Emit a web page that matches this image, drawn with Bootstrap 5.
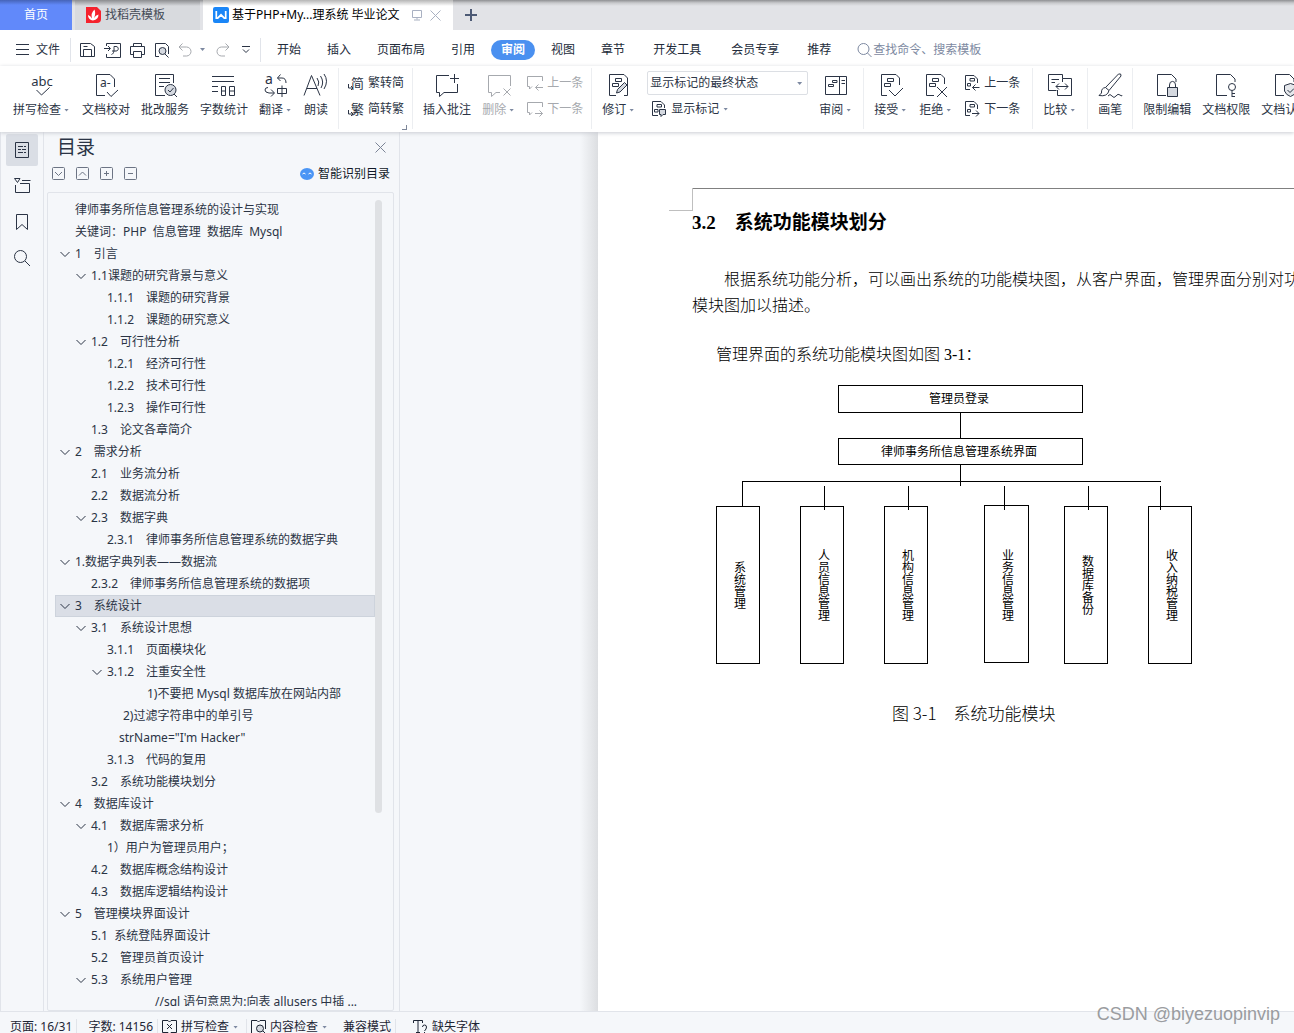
<!DOCTYPE html>
<html lang="zh-CN">
<head>
<meta charset="utf-8">
<meta name="viewport" content="width=device-width, initial-scale=1">
<title>基于PHP+Mysql的律师事务所信息管理系统 毕业论文</title>
<link href="https://cdn.jsdelivr.net/npm/bootstrap@5.3.0/dist/css/bootstrap.min.css" rel="stylesheet">
<style>
  :root { --ink:#2b3445; --chrome:#f5f7fa; --edge:#e1e4ea; --soft:#7d89a1; }
  body { font:12px/16px "Noto Sans","Noto Sans CJK SC",sans-serif; color:var(--ink); background:var(--chrome); }
  button { font:inherit; color:inherit; background:none; border:0; padding:0; white-space:nowrap; }
  svg { fill:none; flex:none; display:block; overflow:visible; }
  svg:not([stroke]) { stroke:currentColor; }
  .caret { width:5px; height:3px; flex:none; background:var(--soft); clip-path:polygon(0 0,100% 0,50% 100%); }

  .tabstrip { height:30px; background:linear-gradient(#8f9093,#c9cacd 3px,#e2e3e7 6px); }
  .tab-home { width:72px; background:linear-gradient(#4664b8,#6189fa 5px); color:#fff; margin-right:3px; }
  .tab-docer { width:125px; background:linear-gradient(#8b8c8f,#d8dade 6px); padding-left:11px; gap:4px; margin-right:3px; color:#444a56; }
  .tab-doc { width:250px; background:linear-gradient(#b5b5b5,#fff 6px); padding-left:10px; gap:3px; color:#000; }
  .tab-doc .dim { color:#a9b1c2; }
  .tab-new { padding:0 12px; }

  .menubar { height:36px; padding:3px 0 0 16px; }
  .file-btn { gap:7px; }
  .quick { padding:0 9px 0 8px; gap:7px; border:solid var(--edge); border-width:0 1px; height:24px; margin-left:10px; margin-right:3px; }
  .menu-item { padding:0 13px; color:#222b3a; }
  .menu-wide { padding:0 15px; }
  .menu-on { background:#4a90f0; color:#fff; border-radius:10px; height:20px; padding:0 10px; margin:0 3px; font-weight:700; }
  .search-box { color:var(--soft); margin-left:13px; }
  .search-box input { border:0; outline:0; background:none; width:140px; padding:0; color:var(--soft); }
  .search-box input::placeholder { color:var(--soft); opacity:1; }

  .ribbon { height:66px; box-shadow:0 1px 4px #c9ccd2; z-index:2; }
  .rgroup { border-right:1px solid #eceef1; padding:5px 10px 0; gap:11px; height:61px; margin-top:2px; flex:none; position:relative; }
  .rgroup:first-child { padding-left:13px; }
  .rbtn { display:flex; flex-direction:column; align-items:center; gap:1px; height:50px; }
  .rbtn svg { margin:0 -1px; }
  .rbtn span { display:flex; align-items:center; gap:3px; padding-right:2px; margin-top:2px; }
  .rbtn span.plain { padding-right:0; }
  .rstack { display:flex; flex-direction:column; gap:10px; align-items:flex-start; padding-top:2px; }
  .rstack button { display:flex; align-items:center; gap:4px; height:16px; }
  .off { color:#a6a9ae; }
  .state-wrap { position:relative; height:16px; }
  .state-select { display:block; appearance:none; width:161px; height:24px; border:1px solid #dcdfe4; border-radius:2px; padding:0 2px; background:#fff; color:var(--ink); font:inherit; margin-top:-4px; }
  .state-wrap .caret { position:absolute; right:6px; top:7px; }
  .launcher { position:absolute; right:5px; bottom:-1px; width:5px; height:5px; border:solid #7d8799; border-width:0 1px 1px 0; }

  .rail { width:44px; border:solid var(--edge); border-width:0 1px; padding:2px 0 0 5px; gap:4px; }
  .rail button { width:32px; height:32px; display:flex; align-items:center; justify-content:center; border-radius:2px; }
  .rail .active { background:#dadee5; }
  .outline-pane { width:356px; padding:3px 5px 0 3px; border-right:1px solid var(--edge); }
  .outline-title { font-size:19px; line-height:24px; margin:0; padding-left:10px; font-weight:400; }
  .outline-tools { gap:11px; padding:8px 4px 0 5px; height:33px; color:#6c7484; }
  .outline-tools button { height:13px; }
  .outline-tools .smart { color:#111827; gap:4px; height:14px; }
  .tree-box { border:1px solid var(--edge); border-radius:2px; padding:6px 11px 4px 7px; min-height:0; }
  .tree { list-style:none; margin:0; padding:0; overflow:hidden; min-width:0; }
  .tree li { height:22px; line-height:22px; padding-left:5px; display:flex; align-items:center; white-space:pre; }
  .tree li svg, .tree li i { width:10px; margin-right:5px; flex:none; }
  .tree .d1 { padding-left:21px; } .tree .d2 { padding-left:37px; }
  .tree .d3 { padding-left:49px; } .tree .d4 { padding-left:53px; } .tree .d5 { padding-left:77px; } .tree .d6 { padding-left:85px; }
  .tree .current { background:#dadee6; box-shadow:inset 0 0 0 1px #cdd3dc; }
  .track { width:7px; padding-top:1px; }
  .thumb { background:#dfe1e4; border-radius:4px; height:76%; }

  .gutter { width:198px; background:linear-gradient(to right,transparent 180px,#dcdee1); flex:none; }
  .paper { background:#fff; color:#000; min-width:0; padding:56px 0 0 94px; font:16px/26px "Liberation Serif","Noto Sans CJK SC",serif; font-weight:300; white-space:nowrap; position:relative; }
  .margin-rule { border-top:1px solid #808080; height:23px; }
  .crop-mark { position:absolute; left:71px; top:56px; width:24px; height:23px; border:solid #bfbfbf; border-width:0 1px 1px 0; }
  .paper h2 { font-size:19px; line-height:24px; font-weight:700; margin:0 0 32px; }
  .indent { text-indent:2em; margin:0 0 23px; }
  .lead-in { margin:0 0 17px; padding-left:24px; }
  .chart { margin-left:24px; fill:#000; shape-rendering:crispEdges; font:12px "Noto Sans CJK SC",sans-serif; }
  .chart rect, .chart path { fill:none; stroke:#000; }
  .chart .v { writing-mode:vertical-rl; }
  .caption-line { font-size:17px; margin:35px 0 0; padding-left:200px; font-family:"Noto Sans CJK SC",sans-serif; }

  .statusbar { height:22px; border-top:1px solid var(--edge); padding:7px 0 0 10px; color:#1d2534; white-space:nowrap; }
  .statusbar > * { height:16px; display:flex; align-items:center; gap:4px; flex:none; }
  .sep { border-left:1px solid var(--edge); }
  .stamp { position:absolute; right:14px; bottom:8px; font:18px/22px "Liberation Sans",sans-serif; color:#9a9ca0; z-index:3; }
</style>
</head>
<body class="vh-100 d-flex flex-column overflow-hidden position-relative">

<header class="tabstrip d-flex flex-shrink-0">
  <button class="tab-home">首页</button>
  <button class="tab-docer d-flex align-items-center">
    <svg width="15" height="16" viewBox="0 0 15 16" stroke="none"><path fill="#f5222d" d="M0 0h11l4 4v8a4 4 0 0 1-4 4H0z"/><path fill="#fff" d="M7 13.500C3.500 13 2 10.500 2 8q2.500.5 4 3.500Q4.500 6 8.500 2.500 10 7 8 11q1.500-3 4.500-3.500 0 5-5.500 6z"/></svg>
    找稻壳模板
  </button>
  <button class="tab-doc d-flex align-items-center">
    <svg width="16" height="16" viewBox="0 0 16 16" stroke="none"><rect width="16" height="16" rx="2" fill="#1a86f7"/><path fill="none" stroke="#fff" stroke-width="1.7" d="M3.300 4v7.200h1.400L8 7.800l3.300 3.400h1.400V4"/></svg>
    <span>基于PHP+My...理系统 毕业论文</span>
    <svg class="dim ms-2" width="12" height="12" viewBox="0 0 12 12"><path d="M1.500 1.500h9v7h-9zM6 8.500v2M3 11h6"/></svg>
    <svg class="dim ms-1" width="11" height="11" viewBox="0 0 11 11"><path d="M.5.5l10 10M10.500.5l-10 10"/></svg>
  </button>
  <button class="tab-new" aria-label="新建"><svg width="12" height="12" viewBox="0 0 12 12" stroke="#4d5a75" stroke-width="2"><path d="M6 0v12M0 6h12"/></svg></button>
</header>

<nav class="menubar bg-white d-flex align-items-center flex-shrink-0">
  <button class="file-btn d-flex align-items-center"><svg width="13" height="11" viewBox="0 0 13 11"><path d="M0 .5h13M0 5.500h13M0 10.500h13"/></svg>文件</button>
  <div class="quick d-flex align-items-center">
    <button aria-label="保存"><svg width="18" height="16" viewBox="0 0 18 16"><path d="M1.500 14.500V1.500H11.500L15.500 4.500V14.500zM4.500 14.500V7.500H12.500V14.500M4.500 4.500H8.500"/></svg></button>
    <button aria-label="输出为PDF"><svg width="18" height="16" viewBox="0 0 18 16"><path d="M2.500 4V1.500H16.500V15.500H2.500V12M0 6.500H6M4 4l2.500 2.500L4 9M7.500 12.500c3-1 2.500-5 2.500-8h2c3 0 3 4.500 0 4.500h-4"/></svg></button>
    <button aria-label="打印"><svg width="17" height="16" viewBox="0 0 17 16"><path d="M4.500 4.500V1.500H12.500V4.500M4.500 12.500H1.500V4.500H15.500V12.500H12.500M4.500 9.500H12.500V15.500H4.500z"/></svg></button>
    <button aria-label="打印预览"><svg width="18" height="16" viewBox="0 0 18 16"><path d="M6 14.500H2.500V1.500H12.500L15.500 4.500V12"/><circle cx="9.500" cy="9" r="3.500" fill="#d5d9e0"/><path d="M12 12l3.500 3.500"/></svg></button>
    <button class="off d-flex align-items-center gap-2" aria-label="撤销"><svg width="14" height="14" viewBox="0 0 14 14"><path d="M4.500.5L1 4l3.500 3.500M1 4h7.500a4.500 4.500 0 0 1 0 9H5"/></svg><i class="caret"></i></button>
    <button class="off ms-1" aria-label="恢复"><svg width="14" height="14" viewBox="0 0 14 14"><path d="M9.500.5L13 4 9.500 7.500M13 4H5.500a4.500 4.500 0 0 0 0 9H9"/></svg></button>
    <button class="ms-1" aria-label="更多"><svg width="10" height="8" viewBox="0 0 10 8"><path d="M1 .5h8M2 3.500l3 3 3-3"/></svg></button>
  </div>
  <button class="menu-item">开始</button>
  <button class="menu-item">插入</button>
  <button class="menu-item">页面布局</button>
  <button class="menu-item">引用</button>
  <button class="menu-item menu-on">审阅</button>
  <button class="menu-item">视图</button>
  <button class="menu-item">章节</button>
  <button class="menu-item menu-wide">开发工具</button>
  <button class="menu-item menu-wide">会员专享</button>
  <button class="menu-item">推荐</button>
  <label class="search-box d-flex align-items-center"><svg width="16" height="16" viewBox="0 0 16 16"><circle cx="6.500" cy="7" r="5.500"/><path d="M10.500 11l4 4"/></svg><input type="text" aria-label="查找命令" placeholder="查找命令、搜索模板"></label>
</nav>

<div class="ribbon bg-white d-flex position-relative flex-shrink-0">
  <div class="rgroup d-flex">
    <button class="rbtn"><svg width="26" height="26" viewBox="0 0 26 26"><text x="13" y="13" text-anchor="middle" font-size="13" fill="currentColor" stroke="none">abc</text><path d="M7.500 17l5 5 8-7.500"/></svg><span>拼写检查<i class="caret"></i></span></button>
    <button class="rbtn"><svg width="26" height="26" viewBox="0 0 26 26"><path d="M12 22.500H3.500V1.500H17L21.500 6V14M14 19l4 4.500L25 17"/><text x="7" y="14" font-size="12" fill="currentColor" stroke="none">a-</text></svg><span class="plain">文档校对</span></button>
    <button class="rbtn"><svg width="26" height="26" viewBox="0 0 26 26"><path d="M13 22.500H3.500V1.500H21.500V10M7 5.500H18M7 9.500H18M7 13.500H12"/><circle cx="18.500" cy="17" r="5.500" fill="#d5d9e0"/><path d="M16 17l2 2 3.500-4M22 21l3 3"/></svg><span class="plain">批改服务</span></button>
    <button class="rbtn"><svg width="26" height="26" viewBox="0 0 26 26"><path d="M1 3.500H23M1 8.500H23M1 13.500H7M1 18.500H7M10.500 13.500H14.500V22.500H10.500zM10.500 18H14.500M18.500 13.500H23.500V22.500H18.500zM18.500 18H23.500"/></svg><span class="plain">字数统计</span></button>
    <button class="rbtn"><svg width="26" height="26" viewBox="0 0 26 26"><text x="2" y="11" font-size="14" fill="currentColor" stroke="none">a</text><path d="M17.500 1.500L14.500 5l3 3M14.500 5H19q4 0 4 5M5 14.500q-3 0-3 2.500t4 3h5M8 16.500l3.500 3.500L8 23.500M14.500 15.500H23.500V20.500H14.500zM19 12.500V24"/></svg><span>翻译<i class="caret"></i></span></button>
    <button class="rbtn"><svg width="26" height="26" viewBox="0 0 26 26"><path d="M1 22.500L8.500 2.500 17 22.500M4 15.500H14M14 5q3 4 1 8M17.500 3q4 6 .5 12M21 1q5 7 0 15"/></svg><span class="plain">朗读</span></button>
  </div>
  <div class="rgroup d-flex px-2">
    <div class="rstack">
      <button><svg width="17" height="16" viewBox="0 0 17 16"><text x="4" y="13" font-size="13" fill="currentColor" stroke="none">简</text><path d="M1.500 9v4H6M4 11l2 2-2 2"/></svg>繁转简</button>
      <button><svg width="17" height="16" viewBox="0 0 17 16"><text x="4" y="13" font-size="13" fill="currentColor" stroke="none">繁</text><path d="M1.500 9v4H6M4 11l2 2-2 2"/></svg>简转繁</button>
    </div>
    <i class="launcher"></i>
  </div>
  <div class="rgroup d-flex pe-2">
    <button class="rbtn"><svg width="26" height="26" viewBox="0 0 26 26"><path d="M15 2.500H2.500V19.500H5.500V23.500L10 19.500H23.500V11M20.500 1V10M16 5.500H25"/></svg><span class="plain">插入批注</span></button>
    <button class="rbtn off"><svg width="26" height="26" viewBox="0 0 26 26"><path d="M24.500 13V2.500H2.500V19.500H5.500V23.500L10 19.500H14M17.500 15.500l7 7M24.500 15.500l-7 7"/></svg><span>删除<i class="caret"></i></span></button>
    <div class="rstack off">
      <button><svg width="16" height="16" viewBox="0 0 16 16"><path d="M15.500 6V1.500H.5V11.500H2.500V14L5 11.500M8.500 12.500H16M11.500 9.500l-3 3 3 3"/></svg>上一条</button>
      <button><svg width="16" height="16" viewBox="0 0 16 16"><path d="M15.500 6V1.500H.5V11.500H2.500V14L5 11.500M8 12.500H15.500M12.500 9.500l3 3-3 3"/></svg>下一条</button>
    </div>
  </div>
  <div class="rgroup d-flex">
    <button class="rbtn"><svg width="26" height="26" viewBox="0 0 26 26"><path d="M10 22.500H3.500V1.500H18L21.500 5V22.500H18M9.500 5.500H15.500V8.500H9.500zM6.500 10.500H12.500V13.500H6.500z"/><path fill="#d5d9e0" d="M10.500 20l1-3.500 7-7 2.500 2.500-7 7z"/></svg><span>修订<i class="caret"></i></span></button>
    <div class="rstack">
      <div class="state-wrap"><select class="state-select" aria-label="显示标记状态"><option>显示标记的最终状态</option></select><i class="caret"></i></div>
      <button class="ms-1"><svg width="16" height="16" viewBox="0 0 16 16"><path d="M7 14.500H1.500V.5H10L13.500 4V7M6 3.500H10.500V6H6zM3.500 8.500H7V11H3.500z"/><path fill="#d5d9e0" d="M8.500 8.500H14.500V13.500H12L10 15.500V13.500H8.500z"/></svg>显示标记<i class="caret"></i></button>
    </div>
    <button class="rbtn"><svg width="26" height="26" viewBox="0 0 26 26"><path d="M2.500 3.500H23.500V21.500H2.500zM16.500 3.500V21.500M9.500 7.500H14V9.500H9.500zM5.500 11.500H10.500V13.500H5.500zM18.500 7.500H22M18.500 10.500H22"/></svg><span>审阅<i class="caret"></i></span></button>
  </div>
  <div class="rgroup d-flex pe-2">
    <button class="rbtn"><svg width="26" height="26" viewBox="0 0 26 26"><path d="M9 22.500H3.500V1.500H18L21.500 5V12M9.500 5.500H15.500V8.500H9.500zM6.500 10.500H12.500V13.500H6.500zM11 17l6 6 8-8"/></svg><span>接受<i class="caret"></i></span></button>
    <button class="rbtn"><svg width="26" height="26" viewBox="0 0 26 26"><path d="M11 22.500H3.500V1.500H18L21.500 5V11M9.500 5.500H15.500V8.500H9.500zM6.500 10.500H12.500V13.500H6.500zM14 14l10 10M24 14L14 24"/></svg><span>拒绝<i class="caret"></i></span></button>
    <div class="rstack me-1">
      <button><svg width="16" height="16" viewBox="0 0 16 16"><path d="M6 14.500H1.500V.5H10L13.500 4V8M6 3.500H10.500V6H6zM3.500 8.500H6.500V11H3.500zM8.500 12.500H15.500M11.500 9.500l-3 3 3 3"/></svg>上一条</button>
      <button><svg width="16" height="16" viewBox="0 0 16 16"><path d="M6 14.500H1.500V.5H10L13.500 4V8M6 3.500H10.500V6H6zM3.500 8.500H6.500V11H3.500zM8 12.500H15M12 9.500l3 3-3 3"/></svg>下一条</button>
    </div>
  </div>
  <div class="rgroup d-flex">
    <button class="rbtn"><svg width="26" height="26" viewBox="0 0 26 26"><path d="M9.500 17.500H1.500V1.500H15.500V5.500H24.500V22.500H10.500V17M15.500 5.500V9M4.500 6.500H12M4.500 9.500H8M9 13.500H21M12 10.500l-3 3 3 3M18 10.500l3 3-3 3"/></svg><span>比较<i class="caret"></i></span></button>
  </div>
  <div class="rgroup d-flex">
    <button class="rbtn"><svg width="26" height="26" viewBox="0 0 26 26"><path d="M21.500 1Q24.500 0 24 3L12 17.500 8.500 14.500zM8.500 14.500q-4.500.5-4 5.500L2 22.500q8.500 1.500 10-5M11 23q2-3 4 0t4 0 4-1 2 0"/></svg><span class="plain">画笔</span></button>
  </div>
  <div class="rgroup d-flex border-0">
    <button class="rbtn"><svg width="26" height="26" viewBox="0 0 26 26"><path d="M12 22.500H3.500V1.500H17.500L22 6V9M15.500 14.500V12a2.500 3 0 0 1 6 0V14.500"/><path fill="#d5d9e0" d="M13.500 14.500H23.500V23.500H13.500z"/></svg><span class="plain">限制编辑</span></button>
    <button class="rbtn"><svg width="26" height="26" viewBox="0 0 26 26"><path d="M14 22.500H3.500V1.500H17.500L22 6V9"/><circle cx="19" cy="14" r="3.500"/><path d="M19 17.500V24M19 20.500H22M19 23.500H22"/></svg><span class="plain">文档权限</span></button>
    <button class="rbtn"><svg width="26" height="26" viewBox="0 0 26 26"><path d="M12 22.500H3.500V1.500H17.500L22 6V9"/><path fill="#e5e7eb" d="M18.500 10.500L24.500 12.500V18Q23 22 18.500 23.500 14 22 12.500 18V12.500z"/><path d="M15.500 17l2.500 2.500 4-4"/></svg><span class="plain">文档认证</span></button>
  </div>
</div>

<main class="d-flex flex-grow-1 overflow-hidden">
  <nav class="rail d-flex flex-column flex-shrink-0">
    <button class="active" aria-label="目录"><svg width="16" height="18" viewBox="0 0 16 18"><path d="M1.500 1.500H14.500V16.500H1.500zM4 5.500H9M10 5.500H12M4 8.500H7M8 8.500H12M4 11.500H9M10 11.500H12"/></svg></button>
    <button aria-label="章节"><svg width="17" height="16" viewBox="0 0 17 16"><path d="M.5.5H6L3.500 4.500zM8 2.500H16.500M1.500 7V14.500H15.500V5.500H6"/></svg></button>
    <button aria-label="书签"><svg width="14" height="18" viewBox="0 0 14 18"><path d="M1.500 1.500H12.500V16.500L7 11.500 1.500 16.500z"/></svg></button>
    <button aria-label="查找"><svg width="18" height="18" viewBox="0 0 18 18"><circle cx="7.500" cy="7.500" r="6"/><path d="M12 12l5 5"/></svg></button>
  </nav>

  <aside class="outline-pane d-flex flex-column flex-shrink-0">
    <div class="d-flex justify-content-between align-items-center pe-2">
      <h1 class="outline-title">目录</h1>
      <button aria-label="关闭"><svg width="11" height="11" viewBox="0 0 11 11" stroke="#7b8496"><path d="M.5.5l10 10M10.500.5l-10 10"/></svg></button>
    </div>
    <div class="outline-tools d-flex">
      <button aria-label="全部展开"><svg width="13" height="13" viewBox="0 0 13 13"><rect x=".5" y=".5" width="12" height="12" rx="1"/><path d="M3 5l3.500 3.500L10 5"/></svg></button>
      <button aria-label="全部收起"><svg width="13" height="13" viewBox="0 0 13 13"><rect x=".5" y=".5" width="12" height="12" rx="1"/><path d="M3 8.500L6.500 5 10 8.500"/></svg></button>
      <button aria-label="展开"><svg width="13" height="13" viewBox="0 0 13 13"><rect x=".5" y=".5" width="12" height="12" rx="1"/><path d="M4 6.500H9M6.500 4V9"/></svg></button>
      <button aria-label="收起"><svg width="13" height="13" viewBox="0 0 13 13"><rect x=".5" y=".5" width="12" height="12" rx="1"/><path d="M4 6.500H9"/></svg></button>
      <button class="smart d-flex align-items-center ms-auto"><svg width="14" height="12" viewBox="0 0 14 12" stroke="none"><ellipse cx="7" cy="6" rx="7" ry="6" fill="#4a95f5"/><path stroke="#fff" d="M2.500 6q1.500-2 3 0M8.500 6q1.500-2 3 0"/></svg>智能识别目录</button>
    </div>
    <div class="tree-box d-flex flex-grow-1">
      <ul class="tree flex-grow-1" id="tree">
        <li><i></i>律师事务所信息管理系统的设计与实现</li>
        <li><i></i>关键词：PHP&nbsp; 信息管理&nbsp; 数据库&nbsp; Mysql</li>
        <li class="open">1&emsp;引言</li>
        <li class="d1 open">1.1课题的研究背景与意义</li>
        <li class="d2"><i></i>1.1.1&emsp;课题的研究背景</li>
        <li class="d2"><i></i>1.1.2&emsp;课题的研究意义</li>
        <li class="d1 open">1.2&emsp;可行性分析</li>
        <li class="d2"><i></i>1.2.1&emsp;经济可行性</li>
        <li class="d2"><i></i>1.2.2&emsp;技术可行性</li>
        <li class="d2"><i></i>1.2.3&emsp;操作可行性</li>
        <li class="d1"><i></i>1.3&emsp;论文各章简介</li>
        <li class="open">2&emsp;需求分析</li>
        <li class="d1"><i></i>2.1&emsp;业务流分析</li>
        <li class="d1"><i></i>2.2&emsp;数据流分析</li>
        <li class="d1 open">2.3&emsp;数据字典</li>
        <li class="d2"><i></i>2.3.1&emsp;律师事务所信息管理系统的数据字典</li>
        <li class="open">1.数据字典列表——数据流</li>
        <li class="d1"><i></i>2.3.2&emsp;律师事务所信息管理系统的数据项</li>
        <li class="open current">3&emsp;系统设计</li>
        <li class="d1 open">3.1&emsp;系统设计思想</li>
        <li class="d2"><i></i>3.1.1&emsp;页面模块化</li>
        <li class="d2 open">3.1.2&emsp;注重安全性</li>
        <li class="d5"><i></i>1)不要把 Mysql 数据库放在网站内部</li>
        <li class="d4"><i></i>2)过滤字符串中的单引号</li>
        <li class="d3"><i></i>strName="I'm Hacker"</li>
        <li class="d2"><i></i>3.1.3&emsp;代码的复用</li>
        <li class="d1"><i></i>3.2&emsp;系统功能模块划分</li>
        <li class="open">4&emsp;数据库设计</li>
        <li class="d1 open">4.1&emsp;数据库需求分析</li>
        <li class="d2"><i></i>1）用户为管理员用户；</li>
        <li class="d1"><i></i>4.2&emsp;数据库概念结构设计</li>
        <li class="d1"><i></i>4.3&emsp;数据库逻辑结构设计</li>
        <li class="open">5&emsp;管理模块界面设计</li>
        <li class="d1"><i></i>5.1&nbsp; 系统登陆界面设计</li>
        <li class="d1"><i></i>5.2&emsp;管理员首页设计</li>
        <li class="d1 open">5.3&emsp;系统用户管理</li>
        <li class="d6"><i></i>//sql 语句意思为:向表 allusers 中插 ...</li>
      </ul>
      <div class="track"><div class="thumb"></div></div>
    </div>
  </aside>

  <div class="gutter"></div>
  <article class="paper flex-grow-1">
    <i class="crop-mark"></i>
    <div class="margin-rule"></div>
    <h2>3.2&emsp;系统功能模块划分</h2>
    <p class="indent">根据系统功能分析，可以画出系统的功能模块图，从客户界面，管理界面分别对功<br>模块图加以描述。</p>
    <p class="lead-in">管理界面的系统功能模块图如图 3-1：</p>
    <svg class="chart" width="477" height="280" viewBox="0 0 477 280" stroke="none">
      <rect x="122.500" y=".5" width="244" height="27"/><text x="243" y="18" text-anchor="middle">管理员登录</text>
      <rect x="122.500" y="53.500" width="244" height="26"/><text x="243" y="71" text-anchor="middle">律师事务所信息管理系统界面</text>
      <path d="M244.500 28V53M244.500 80V101M26.500 121V97M26 96.500H445M108.500 101V125M192.500 101V125M288.500 101V125M372.500 101V125M444.500 101V125"/>
      <rect x=".5" y="121.500" width="43" height="157"/><rect x="84.500" y="121.500" width="43" height="157"/><rect x="168.500" y="121.500" width="43" height="157"/>
      <rect x="268.500" y="120.500" width="44" height="157"/><rect x="348.500" y="121.500" width="43" height="157"/><rect x="432.500" y="121.500" width="43" height="157"/>
      <g text-anchor="middle">
        <text class="v" x="24" y="200">系统管理</text><text class="v" x="108" y="200">人员信息管理</text><text class="v" x="192" y="200">机构信息管理</text>
        <text class="v" x="292" y="200">业务信息管理</text><text class="v" x="372" y="200">数据库备份</text><text class="v" x="456" y="200">收入纳税管理</text>
      </g>
    </svg>
    <p class="caption-line">图 3-1&emsp;系统功能模块</p>
  </article>
</main>

<footer class="statusbar d-flex flex-shrink-0">
  <span>页面: 16/31</span>
  <span class="sep ms-1 ps-2">&nbsp;字数: 14156</span>
  <button class="sep ms-1 ps-1"><svg width="15" height="14" viewBox="0 0 15 14"><path d="M6 12.500H.5V.5H6L7.500 2 9 .5H14.500V12.500H9L7.500 14 6 12.500M5 4l5 5M10 4l-5 5"/></svg>拼写检查<i class="caret"></i></button>
  <button class="sep ms-2 ps-1"><svg width="15" height="14" viewBox="0 0 15 14"><path d="M5 13.500H.5V.5H6L7.500 2 9 .5H14.500V9"/><circle cx="9" cy="8.500" r="3.500" fill="#d5d9e0"/><path d="M12 11l3 3"/></svg>内容检查<i class="caret"></i></button>
  <span class="ms-3">兼容模式</span>
  <button class="sep ms-1 ps-3"><svg width="16" height="14" viewBox="0 0 16 14"><path d="M1.500 3V.5H10.500V3M6 .5V12.500M4 12.500H8M10.500 7q0-2 2-2t2 2-2 4M12.500 12V14"/></svg>缺失字体</button>
</footer>
<div class="stamp">CSDN @biyezuopinvip</div>

<script src="https://cdn.jsdelivr.net/npm/bootstrap@5.3.0/dist/js/bootstrap.bundle.min.js"></script>
<script>
  // Put an expand arrow before every entry that has children.
  document.querySelectorAll('#tree .open').forEach(function (li) {
    li.insertAdjacentHTML('afterbegin', '<svg height="8" viewBox="0 0 10 8"><path d="M.5 2L5 6.500 9.500 2"/></svg>');
  });
</script>
</body>
</html>
